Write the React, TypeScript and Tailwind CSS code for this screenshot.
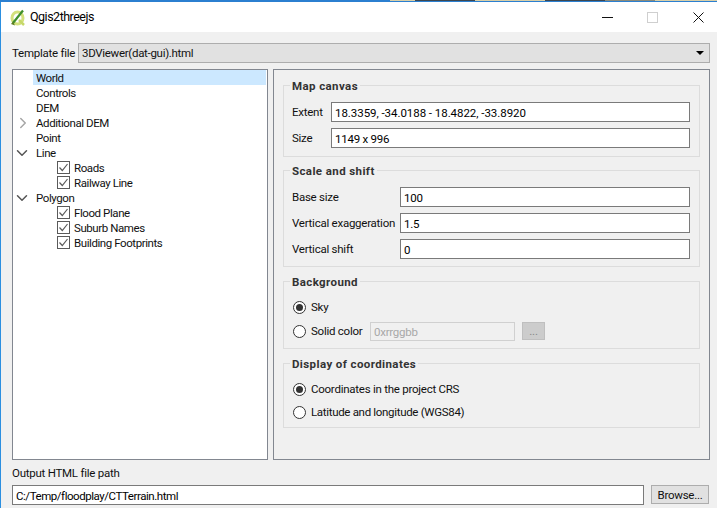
import { ChevronRight, ChevronDown } from 'lucide-react';

const font = "font-['Roboto','Open_Sans',sans-serif]";

const QgisLogo = () => (
  <svg width="16" height="17" viewBox="0 0 16 17">
    <ellipse cx="7.5" cy="9" rx="5.5" ry="6" fill="none" stroke="#d3e07c" strokeWidth="3" />
    <path d="M9 11 L14 16" stroke="#c6d86a" strokeWidth="2.5" />
    <path d="M3 14 L13 1.5" stroke="#3f8f2c" strokeWidth="2.2" />
    <path d="M1 15 L5 16.5 L3 12.5 Z" fill="#5c7d20" />
  </svg>
);

const Check = () => (
  <span className="w-[13px] h-[13px] border border-[#5a5a5a] bg-white flex items-center justify-center shrink-0">
    <svg width="11" height="11" viewBox="0 0 11 11">
      <path d="M1.5 5.5 L4.3 8.5 L9.5 2" stroke="#5a5a5a" strokeWidth="1.2" fill="none" />
    </svg>
  </span>
);

const Radio = ({ on }: { on?: boolean }) => (
  <span className="w-[13px] h-[13px] rounded-full border border-[#333] bg-white flex items-center justify-center shrink-0">
    {on && <span className="w-[7px] h-[7px] rounded-full bg-[#333]" />}
  </span>
);

const TreeRow = ({ label, level = 0, arrow, checked, selected }: { label: string; level?: number; arrow?: 'right' | 'down'; checked?: boolean; selected?: boolean }) => (
  <div className="h-[15px] flex items-center relative tracking-[-0.42px]">
    {arrow === 'right' && <ChevronRight size={18} className="absolute left-[1px] text-[#a6a6a6]" />}
    {arrow === 'down' && <ChevronDown size={18} className="absolute left-[0px] text-[#555]" />}
    {level === 0 ? (
      <div className={`ml-[20px] flex-1 h-[15px] pl-[3px] leading-[17px] ${selected ? 'bg-[#cce8ff]' : ''}`}>{label}</div>
    ) : (
      <div className="ml-[44px] flex items-center gap-[4px]">
        {checked && <Check />}
        <span className="pt-[2px]">{label}</span>
      </div>
    )}
  </div>
);

const Group = ({ title, children, className }: { title: string; children: React.ReactNode; className?: string }) => (
  <div className={`relative border border-[#dcdcdc] ${className}`}>
    <span className="absolute -top-[8px] left-[6px] px-[2px] bg-[#f0f0f0] font-bold tracking-[0.4px] text-[#333] leading-[16px] whitespace-nowrap">{title}</span>
    {children}
  </div>
);

const Field = ({ value, className }: { value: string; className?: string }) => (
  <div className={`h-[20px] border border-[#7a7a7a] bg-white px-[3px] leading-[20px] text-black whitespace-nowrap ${className}`}>{value}</div>
);

// strip of the desktop that shows above the window
const TopStrip = () => (
  <div className="h-[1px] flex shrink-0 bg-[#d8cfa8]">
    <div className="w-[390px] bg-[#2b7fd0]" />
    <div className="w-[25px] bg-[#d8cfa8]" />
    <div className="w-[60px] bg-[#3c4650]" />
    <div className="w-[70px] bg-[#d8cfa8]" />
    <div className="w-[60px] bg-[#3c4650]" />
    <div className="w-[50px] bg-[#8a8a7a]" />
  </div>
);

const App = () => {
  return (
    <div className={`${font} w-[717px] h-[508px] bg-[#f0f0f0] text-[11.5px] tracking-[-0.25px] text-[#111] flex flex-col overflow-hidden`}>
      <TopStrip />
      <div className="h-[1px] bg-[#2b7fd0] shrink-0" />
      <div className="flex-1 flex flex-col border-l border-l-[#2b8fe0] min-h-0">
        <div className="h-[30px] bg-white flex items-center shrink-0">
          <div className="ml-[9px] mr-[4px] flex"><QgisLogo /></div>
          <span className="text-[12.5px] tracking-[-0.5px] flex-1 text-black mt-[1px]">Qgis2threejs</span>
          <svg width="11" height="11" viewBox="0 0 11 11" className="mr-[34px]"><path d="M0 5.5 H11" stroke="#111" /></svg>
          <svg width="11" height="11" viewBox="0 0 11 11" className="mr-[35px]"><rect x="0.5" y="0.5" width="10" height="10" fill="none" stroke="#cfcfcf" /></svg>
          <svg width="11" height="11" viewBox="0 0 11 11" className="mr-[13px]"><path d="M0.5 0.5 L10.5 10.5 M10.5 0.5 L0.5 10.5" stroke="#111" /></svg>
        </div>

        <div className="flex-1 pl-[11px] pr-[7px] pt-[11px] flex flex-col">
          <div className="flex items-center h-[20px]">
            <span className="w-[66px] whitespace-nowrap pt-[2px]">Template file</span>
            <div className="flex-1 h-[20px] bg-[#e1e1e1] border border-[#adadad] flex items-center px-[3px] justify-between">
              <span className="pt-[2px] tracking-[-0.3px]">3DViewer(dat-gui).html</span>
              <span className="w-0 h-0 border-l-[4px] border-r-[4px] border-t-[4px] border-l-transparent border-r-transparent border-t-black mr-[2px]" />
            </div>
          </div>

          <div className="flex gap-[5px] mt-[6px] h-[391px]">
            <div className="w-[256px] border border-[#828790] bg-white pr-[1px]">
              <TreeRow label="World" selected />
              <TreeRow label="Controls" />
              <TreeRow label="DEM" />
              <TreeRow label="Additional DEM" arrow="right" />
              <TreeRow label="Point" />
              <TreeRow label="Line" arrow="down" />
              <TreeRow label="Roads" level={1} checked />
              <TreeRow label="Railway Line" level={1} checked />
              <TreeRow label="Polygon" arrow="down" />
              <TreeRow label="Flood Plane" level={1} checked />
              <TreeRow label="Suburb Names" level={1} checked />
              <TreeRow label="Building Footprints" level={1} checked />
            </div>

            <div className="flex-1 border border-[#828790] px-[9px] pt-[15px] flex flex-col">
              <Group title="Map canvas" className="h-[72px] pl-[8px] pr-[9px] pt-[16px] flex flex-col gap-[6px]">
                <div className="flex items-center">
                  <span className="w-[39px] pt-[2px]">Extent</span>
                  <Field value="18.3359, -34.0188 - 18.4822, -33.8920" className="flex-1 tracking-[-0.05px]" />
                </div>
                <div className="flex items-center">
                  <span className="w-[39px] pt-[2px]">Size</span>
                  <Field value="1149 x 996" className="flex-1" />
                </div>
              </Group>
              <Group title="Scale and shift" className="mt-[13px] h-[97px] pl-[8px] pr-[9px] pt-[16px] flex flex-col gap-[6px]">
                <div className="flex items-center">
                  <span className="w-[108px] whitespace-nowrap pt-[2px]">Base size</span>
                  <Field value="100" className="flex-1" />
                </div>
                <div className="flex items-center">
                  <span className="w-[108px] whitespace-nowrap pt-[2px]">Vertical exaggeration</span>
                  <Field value="1.5" className="flex-1" />
                </div>
                <div className="flex items-center">
                  <span className="w-[108px] whitespace-nowrap pt-[2px]">Vertical shift</span>
                  <Field value="0" className="flex-1" />
                </div>
              </Group>
              <Group title="Background" className="mt-[14px] h-[68px] px-[9px] pt-[17px] flex flex-col gap-[6px]">
                <div className="flex items-center gap-[5px] h-[16px]"><Radio on /><span className="pt-[2px]">Sky</span></div>
                <div className="flex items-center h-[20px]">
                  <Radio />
                  <span className="ml-[5px] w-[59px] whitespace-nowrap pt-[2px]">Solid color</span>
                  <div className="w-[145px] h-[19px] self-end border border-[#d0d0d0] bg-[#f0f0f0] px-[3px] leading-[19px] text-[#a8a8a8]">0xrrggbb</div>
                  <div className="ml-[7px] w-[23px] h-[18px] self-end mb-[1px] bg-[#cccccc] border border-[#bfbfbf] text-[#888] text-center leading-[16px]">...</div>
                </div>
              </Group>
              <Group title="Display of coordinates" className="mt-[14px] h-[65px] px-[9px] pt-[17px] flex flex-col gap-[7px]">
                <div className="flex items-center gap-[5px] h-[16px]"><Radio on /><span className="pt-[2px]">Coordinates in the project CRS</span></div>
                <div className="flex items-center gap-[5px] h-[16px]"><Radio /><span className="pt-[2px] tracking-[-0.32px]">Latitude and longitude (WGS84)</span></div>
              </Group>
            </div>
          </div>

          <div className="mt-[5px] h-[16px] leading-[16px]">Output HTML file path</div>
          <div className="flex mt-[4px] gap-[7px] items-start">
            <Field value="C:/Temp/floodplay/CTTerrain.html" className="w-[632px] tracking-[-0.45px]" />
            <div className="w-[58px] h-[19px] bg-[#e1e1e1] border border-[#adadad] text-center leading-[18px]">Browse...</div>
          </div>
        </div>
      </div>
    </div>
  );
};

export default App;
